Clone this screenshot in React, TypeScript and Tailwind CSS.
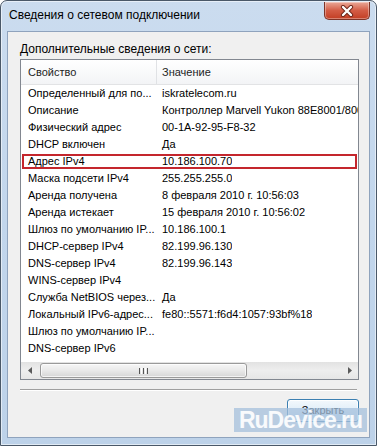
import React from "react";

const rows: [string, string][] = [
  ["Определенный для по...", "iskratelecom.ru"],
  ["Описание", "Контроллер Marvell Yukon 88E8001/8003/8010 PCI Gigabit Ethernet Controller"],
  ["Физический адрес", "00-1A-92-95-F8-32"],
  ["DHCP включен", "Да"],
  ["Адрес IPv4", "10.186.100.70"],
  ["Маска подсети IPv4", "255.255.255.0"],
  ["Аренда получена", "8 февраля 2010 г. 10:56:03"],
  ["Аренда истекает", "15 февраля 2010 г. 10:56:02"],
  ["Шлюз по умолчанию IP...", "10.186.100.1"],
  ["DHCP-сервер IPv4", "82.199.96.130"],
  ["DNS-сервер IPv4", "82.199.96.143"],
  ["WINS-сервер IPv4", ""],
  ["Служба NetBIOS через...", "Да"],
  ["Локальный IPv6-адрес...", "fe80::5571:f6d4:1057:93bf%18"],
  ["Шлюз по умолчанию IP...", ""],
  ["DNS-сервер IPv6", ""],
];

export default function App() {
  return (
    <div className="relative w-[377px] h-[446px] overflow-hidden bg-white font-['Liberation_Sans',Arial,sans-serif] text-black">
      <div className="flex flex-col w-full h-full rounded-t-[7px] border border-[#4a5868] bg-gradient-to-b from-[#cbdcef] via-[#c2d6ec] to-[#bdd2e9] shadow-[inset_0_0_0_1px_rgba(255,255,255,0.55)]">
        {/* Title bar */}
        <div className="flex items-start justify-between h-[30px] shrink-0">
          <div className="pl-[8px] pt-[7px] text-[12px] leading-[15px] text-black">
            Сведения о сетевом подключении
          </div>
          <div className="mt-[1px] mr-[6px] w-[46px] h-[18px] rounded-b-[5px] border border-[#7d3428] border-t-0 bg-gradient-to-b from-[#e9a898] via-[#d35c45] to-[#c23d22] flex items-center justify-center shadow-[inset_0_0_0_1px_rgba(255,255,255,0.35)]">
            <svg width="14" height="12" viewBox="0 0 14 12">
              <path d="M3 2 L11 10 M11 2 L3 10" stroke="#6b2418" strokeWidth="4.2" strokeLinecap="round" />
              <path d="M3 2 L11 10 M11 2 L3 10" stroke="#ffffff" strokeWidth="2.4" strokeLinecap="round" />
            </svg>
          </div>
        </div>

        {/* Client area */}
        <div className="flex-1 mx-[6px] mb-[7px] border border-[#8fa3bd] bg-[#f0f0f0] flex flex-col">
          <div className="pl-[12px] pt-[10px] text-[12px] leading-[15px]">
            Дополнительные сведения о сети:
          </div>

          {/* List box */}
          <div className="mt-[2px] ml-[12px] w-[339px] border border-[#828790] bg-white flex flex-col">
            {/* Header */}
            <div className="flex h-[25px] bg-gradient-to-b from-white to-[#f3f4f6] border-b border-[#e2e3e5] text-[11px] text-[#1e1e1e]">
              <div className="w-[136px] pl-[7px] flex items-center border-r border-[#e0e2e5]">Свойство</div>
              <div className="pl-[5px] flex items-center">Значение</div>
            </div>

            {/* Rows */}
            <div className="h-[277px] overflow-hidden">
              {rows.map(([k, v], i) => (
                <div key={i} className="relative flex h-[17px] items-center text-[11px] whitespace-nowrap">
                  <div className="w-[136px] shrink-0 pl-[7px] overflow-hidden">{k}</div>
                  <div className="pl-[5px] overflow-hidden">{v}</div>
                  {i === 4 && (
                    <div className="absolute left-[1px] right-[1px] top-[1px] bottom-[1px] border-2 border-[#c4262d]" />
                  )}
                </div>
              ))}
            </div>

            {/* Horizontal scrollbar */}
            <div className="flex items-center h-[17px] bg-gradient-to-b from-[#e2e2e2] via-[#eeeeee] to-[#e6e6e6]">
              <div className="w-[17px] h-full flex items-center justify-center">
                <svg width="4" height="7" viewBox="0 0 4 7">
                  <path d="M4 0 L0 3.5 L4 7 Z" fill="#5a5a5a" />
                </svg>
              </div>
              <div className="ml-[2px] w-[207px] h-[15px] rounded-[3px] border border-[#9a9a9a] bg-gradient-to-b from-[#f6f6f6] via-[#e9e9e9] to-[#d6d6d6] flex items-center justify-center shadow-[inset_0_0_0_1px_rgba(255,255,255,0.7)]">
                <div className="flex gap-[1px]">
                  <div className="w-[1px] h-[6px] bg-[#555]" />
                  <div className="w-[1px] h-[6px] bg-white" />
                  <div className="w-[1px] h-[6px] bg-[#555]" />
                  <div className="w-[1px] h-[6px] bg-white" />
                  <div className="w-[1px] h-[6px] bg-[#555]" />
                </div>
              </div>
              <div className="flex-1" />
              <div className="w-[17px] h-full flex items-center justify-center">
                <svg width="4" height="7" viewBox="0 0 4 7">
                  <path d="M0 0 L4 3.5 L0 7 Z" fill="#5a5a5a" />
                </svg>
              </div>
            </div>
          </div>

          {/* Separator */}
          <div className="mt-[9px] ml-[12px] w-[337px] border-t border-[#a0a0a0] border-b border-b-white" />

          {/* Button */}
          <div className="mt-[8px] flex justify-end mr-[10px]">
            <div className="w-[72px] h-[23px] rounded-[3px] border border-[#3c7fb1] bg-gradient-to-b from-[#f3f8fc] via-[#e0eef9] to-[#c6e0f3] shadow-[inset_0_0_0_1px_rgba(255,255,255,0.8)] flex items-center justify-center text-[11px]">
              Закрыть
            </div>
          </div>
        </div>
      </div>

      {/* Watermark */}
      <div className="absolute left-[234px] top-[408px] w-[133px] h-[24px] bg-[#a6c0dc]/75 flex items-center justify-center">
        <span className="text-[23px] leading-none font-bold tracking-[-1px] text-white/90">RuDevice.ru</span>
      </div>
    </div>
  );
}
